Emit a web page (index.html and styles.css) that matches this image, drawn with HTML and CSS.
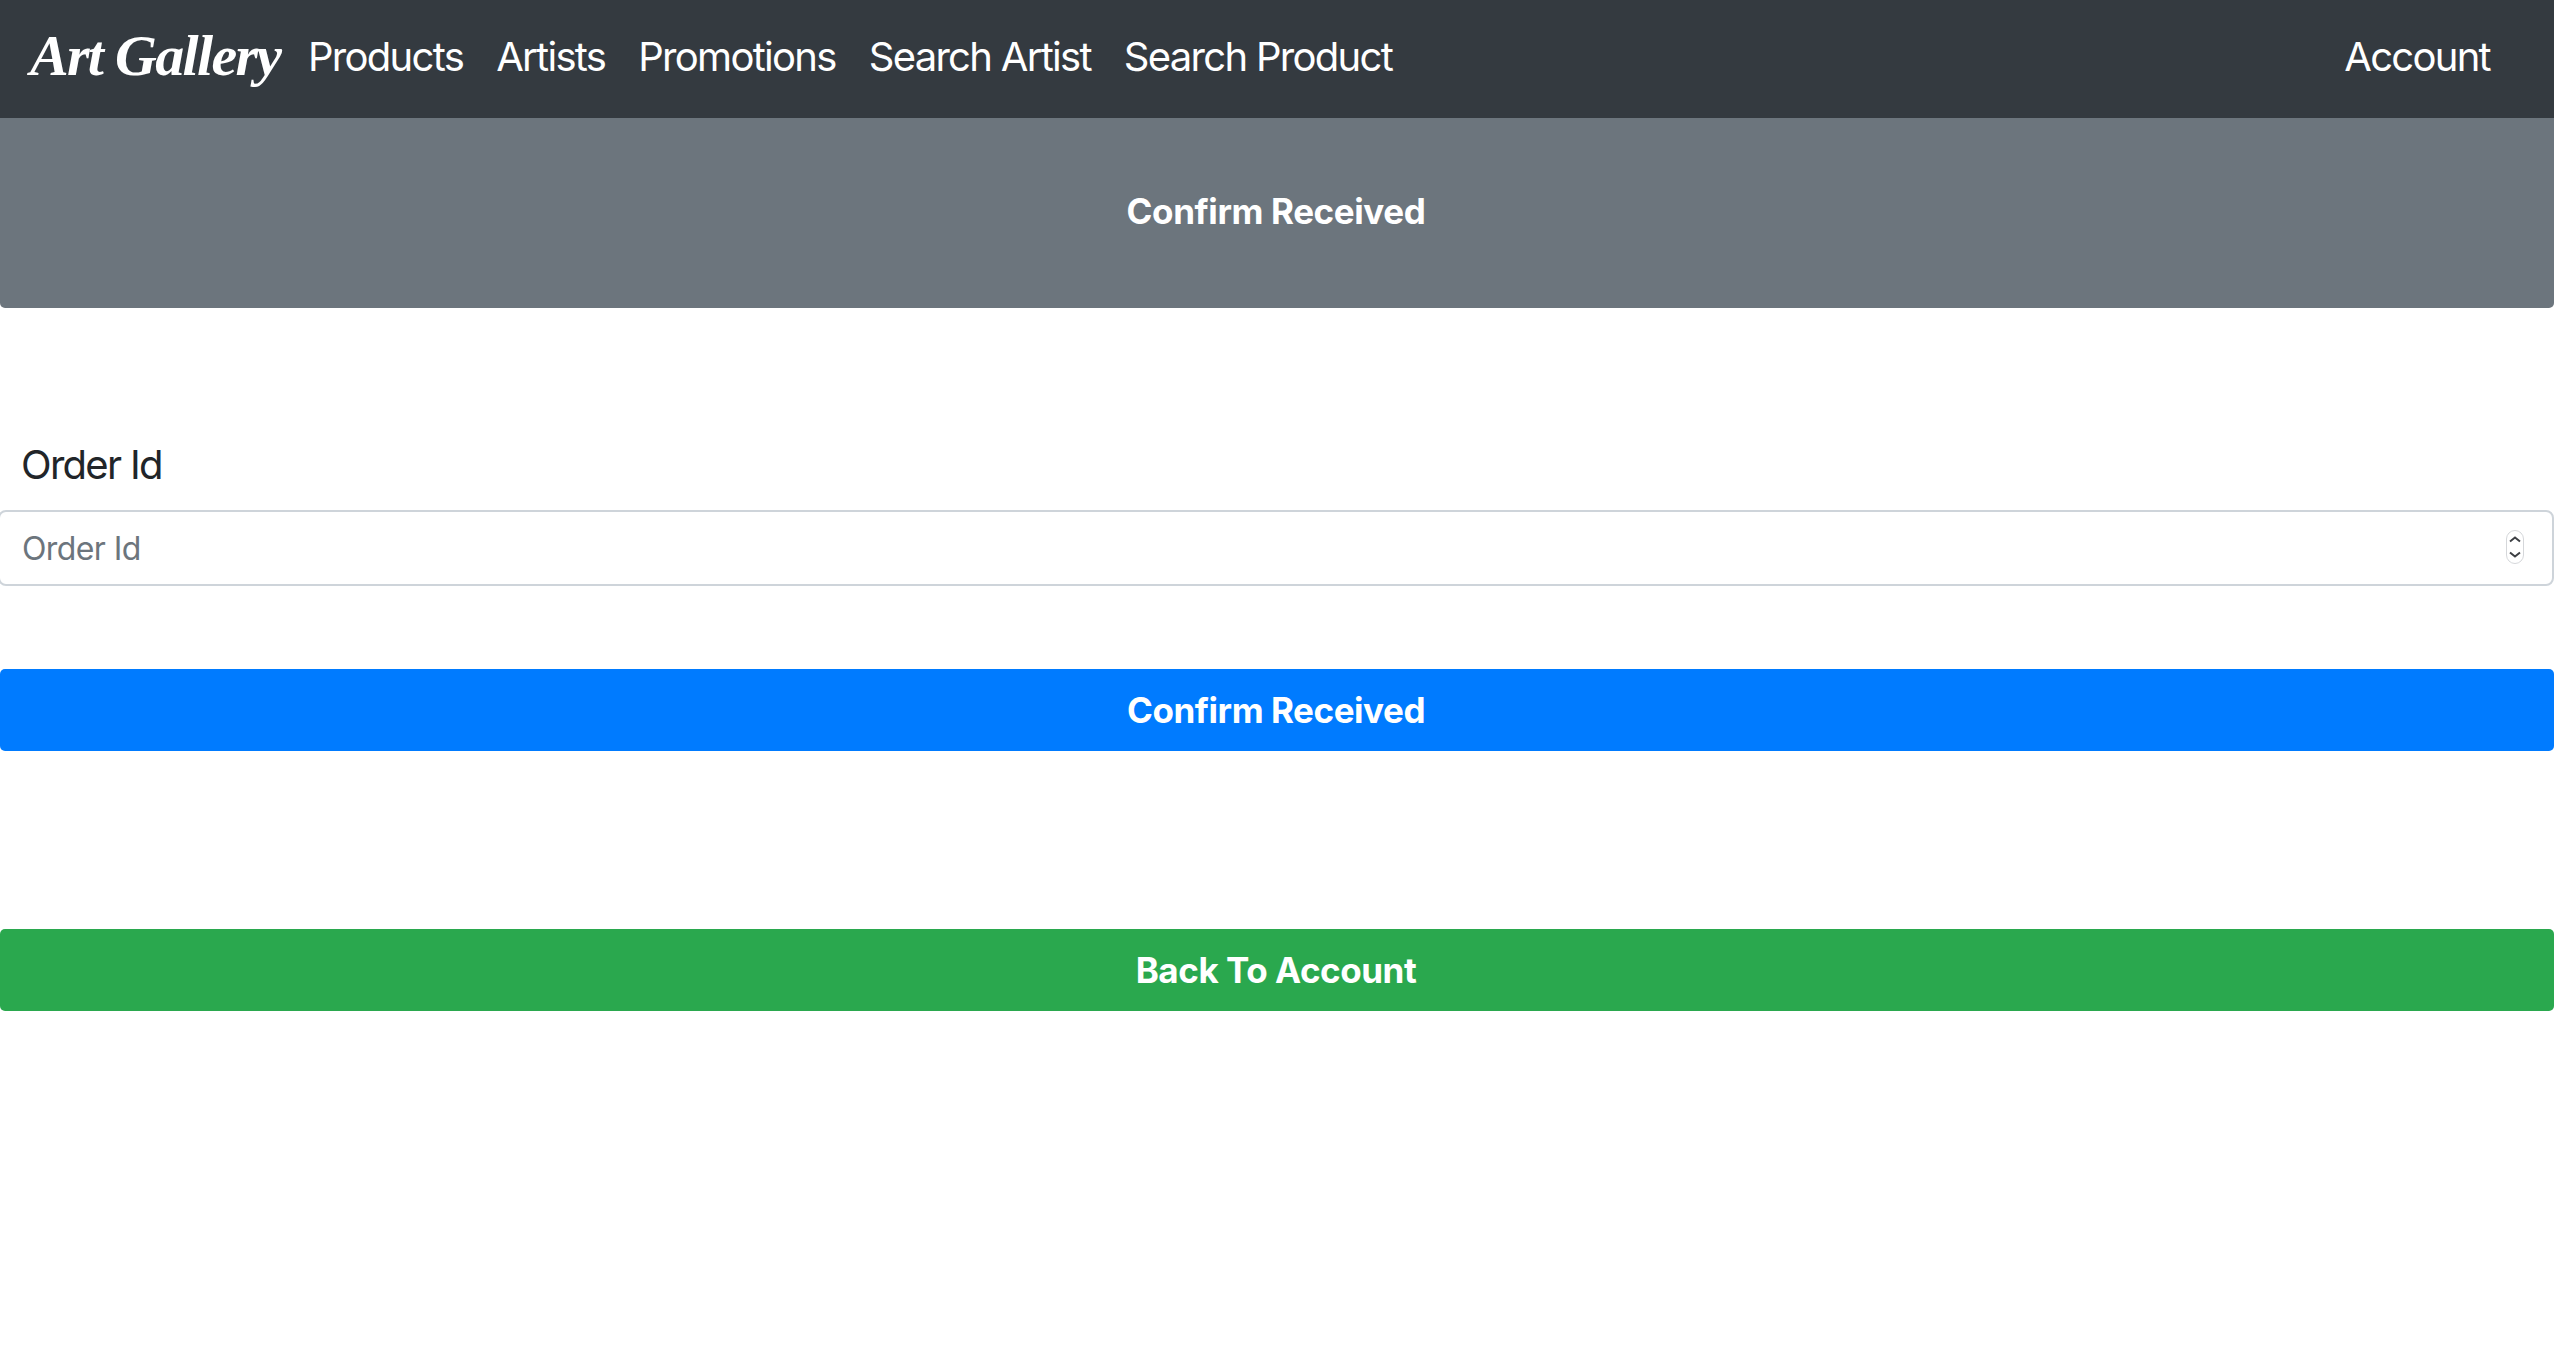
FILE: index.html
```html
<!DOCTYPE html>
<html lang="en">
<head>
    <meta charset="UTF-8">
    <title>Confirm Received</title>
    <link rel="stylesheet" href="styles.css">
</head>
<body>
    <nav class="navbar">
        <a class="brand" href="#">Art Gallery</a>
        <ul class="nav-links">
            <li><a href="#">Products</a></li>
            <li><a href="#">Artists</a></li>
            <li><a href="#">Promotions</a></li>
            <li><a href="#">Search Artist</a></li>
            <li><a href="#">Search Product</a></li>
        </ul>
        <a class="account" href="#">Account</a>
    </nav>
    <div class="jumbotron">Confirm Received</div>
    <form class="order-form" onsubmit="return false;">
        <label class="order-label" for="orderId">Order Id</label>
        <div class="input-wrap">
            <input class="order-input" type="text" id="orderId" placeholder="Order Id">
            <span class="spinner">
                <svg width="18" height="34" viewBox="0 0 18 34">
                    <rect x="0.5" y="0.5" width="17" height="33" rx="8.5" fill="#fff" stroke="#d5d7da"/>
                    <path d="M4 11.5 L9 7.5 L14 11.5 M4 22.5 L9 26.5 L14 22.5" fill="none" stroke="#3c3f43" stroke-width="2"/>
                </svg>
            </span>
        </div>
        <button class="btn btn-blue" type="submit">Confirm Received</button>
    </form>
    <button class="btn btn-green back-btn" type="button">Back To Account</button>
</body>
</html>
```

FILE: styles.css
```css
body { margin: 0; background-color: #fff; font-family: Inter, "Liberation Sans", sans-serif; color: #212529; }
a { color: #fff; text-decoration: none; }

.navbar { display: flex; align-items: center; height: 118px; padding: 0 64px 6px 30px; background-color: #343a40; box-sizing: border-box; }
.brand { font-family: "Liberation Serif", cursive; font-style: italic; font-weight: bold; font-size: 58px; line-height: 1; width: 278px; flex-shrink: 0; white-space: nowrap; letter-spacing: -1.7px; }
.nav-links { display: flex; gap: 33px; list-style: none; margin: 0; padding: 0; flex: 1; }
.nav-links a, .account { font-size: 40px; letter-spacing: -1.7px; }

.jumbotron { display: flex; justify-content: center; height: 190px; padding: 71px 2px 0 0; box-sizing: border-box; background-color: #6c757d; color: #fff; font-size: 35px; font-weight: 700; line-height: 44px; letter-spacing: -0.4px; border-radius: 0 0 5px 5px; }

.order-form { display: block; padding-top: 133px; }
.order-label { display: block; padding-left: 21px; font-size: 40px; line-height: 48px; margin-bottom: 21px; letter-spacing: -1.7px; }
.input-wrap { position: relative; margin-left: -2px; }
.order-input { display: block; width: 100%; height: 76px; padding: 0 22px; box-sizing: border-box; border: 2px solid #ced4da; border-radius: 8px; font-family: inherit; font-size: 32px; letter-spacing: -0.6px; outline: none; }
.order-input::placeholder { color: #6c757d; opacity: 1; }
.spinner { position: absolute; right: 30px; top: 20px; display: flex; }

.btn { display: block; width: 100%; height: 82px; padding: 0 2px 0 0; border: 0; border-radius: 5px; color: #fff; font-family: inherit; font-size: 35px; font-weight: 700; letter-spacing: -0.45px; }
.btn-blue { background-color: #007bff; margin-top: 83px; }
.btn-green { background-color: #2aa84e; }
.back-btn { margin-top: 178px; }
```
